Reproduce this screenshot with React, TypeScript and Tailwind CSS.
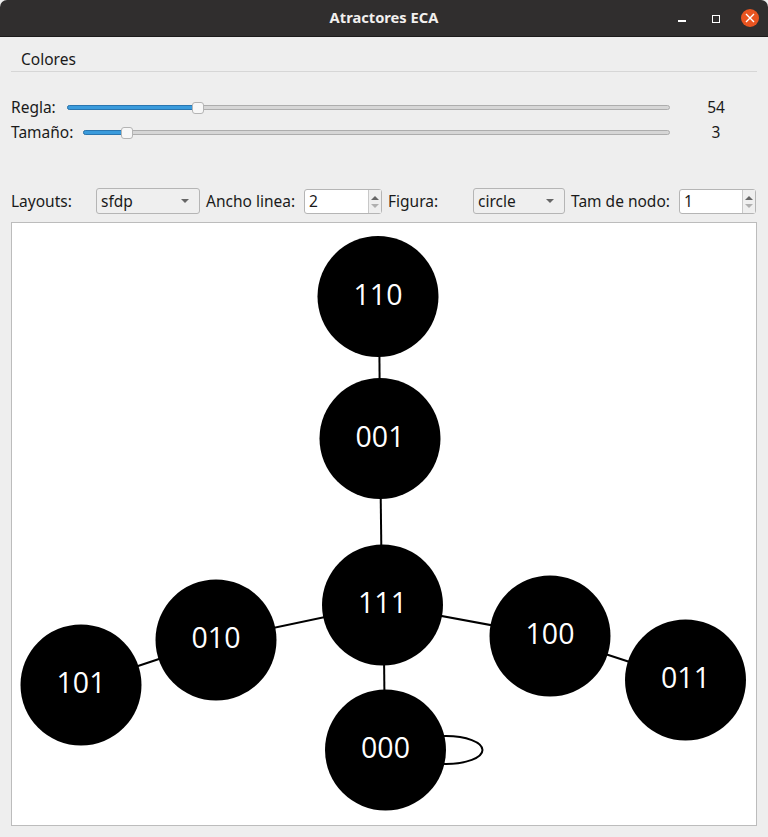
const FONT = "font-['Noto_Sans','Open_Sans',sans-serif]";

const edges = [
  [379, 296, 380, 438],
  [380, 438, 382, 605],
  [382, 605, 216, 640],
  [216, 640, 81, 685],
  [382, 605, 550, 636],
  [550, 636, 685, 680],
  [383.5, 605, 385, 750],
];

const nodes = [
  { x: 378, y: 296.5, label: "110" },
  { x: 380, y: 438.5, label: "001" },
  { x: 382.5, y: 605, label: "111" },
  { x: 216, y: 640, label: "010" },
  { x: 81, y: 685, label: "101" },
  { x: 550, y: 636, label: "100" },
  { x: 685.5, y: 680, label: "011" },
  { x: 385.5, y: 750, label: "000" },
];

const Slider = ({ fill }: { fill: string }) => (
  <div className="relative h-[5px] flex-1 rounded-full border border-[#adadad] bg-[#d6d6d6]">
    <div className={`absolute -top-px -left-px h-[5px] rounded-full border border-[#2a76b0] bg-[#3a9bdc] ${fill}`} />
  </div>
);

const Thumb = ({ pos }: { pos: string }) => (
  <div className={`absolute -top-[3px] h-[12px] w-[12px] rounded-[3px] border border-[#b4b4b4] bg-[#f7f7f7] ${pos}`} />
);

const Combo = ({ value, width }: { value: string; width: string }) => (
  <div className={`flex h-[26px] shrink-0 items-center justify-between self-start rounded-[3px] border border-[#b5b5b5] bg-[#efefef] pr-[10px] pl-1 ${width}`}>
    <span className="mt-[2px]">{value}</span>
    <div className="h-0 w-0 border-x-[4px] border-t-[4px] border-x-transparent border-t-[#666]" />
  </div>
);

const Spin = ({ value, width }: { value: string; width: string }) => (
  <div className={`mt-px flex h-[25px] shrink-0 items-stretch self-start rounded-[3px] border border-[#b5b5b5] bg-white ${width}`}>
    <span className="flex-1 pl-[4px] leading-[23px]">{value}</span>
    <div className="flex w-[13px] flex-col items-center justify-center gap-[4px] border-l border-[#c8c8c8] bg-[#efefef]">
      <div className="h-0 w-0 border-x-[4px] border-b-[4px] border-x-transparent border-b-[#666]" />
      <div className="h-0 w-0 border-x-[4px] border-t-[4px] border-x-transparent border-t-[#b0b0b0]" />
    </div>
  </div>
);

export default function App() {
  return (
    <div className={`flex h-[837px] w-[768px] flex-col overflow-hidden bg-[#eeeeee] text-[15.5px] text-[#1a1a1a] ${FONT}`}>
      <header className="relative flex h-[37px] shrink-0 items-center justify-center rounded-t-[7px] border-b border-[#1c1b1b] bg-[#302e2e]">
        <span className="-mt-px text-[14.7px] font-bold text-[#f2f0ee]">Atractores ECA</span>
        <div className="absolute top-[9px] right-[9px] flex items-center">
          <div className="mt-[5px] h-[2px] w-[8px] bg-white" />
          <div className="mt-[2px] ml-[26px] h-[8px] w-[8px] border border-white" />
          <div className="ml-[21px] flex h-[18px] w-[18px] items-center justify-center rounded-full bg-[#e95420]">
            <svg width="10" height="10" viewBox="0 0 10 10">
              <path d="M1 1 L9 9 M9 1 L1 9" stroke="#fff" strokeWidth="1.4" />
            </svg>
          </div>
        </div>
      </header>

      <div className="mx-[11px] flex h-[35px] shrink-0 items-center border-b border-[#d6d6d6] pt-[11px] pl-[10px]">
        <span>Colores</span>
      </div>

      <div className="mt-[23px] flex h-[25px] shrink-0 items-center pl-[11px]">
        <span className="w-[56px]">Regla:</span>
        <div className="relative flex flex-1 items-center">
          <Slider fill="w-[131px]" />
          <Thumb pos="left-[125px]" />
        </div>
        <span className="w-[98px] pr-[6px] text-center">54</span>
      </div>
      <div className="flex h-[25px] shrink-0 items-center pl-[11px]">
        <span className="w-[72px]">Tamaño:</span>
        <div className="relative flex flex-1 items-center">
          <Slider fill="w-[43px]" />
          <Thumb pos="left-[38px]" />
        </div>
        <span className="w-[98px] pr-[6px] text-center">3</span>
      </div>

      <div className="mt-[43px] flex h-[27px] shrink-0 items-center pl-[11px]">
        <span className="w-[85px]">Layouts:</span>
        <Combo value="sfdp" width="w-[104px]" />
        <span className="w-[104px] pl-[6px]">Ancho linea:</span>
        <Spin value="2" width="w-[78px]" />
        <span className="ml-[2px] w-[89px] pl-[4px]">Figura:</span>
        <Combo value="circle" width="w-[92px]" />
        <span className="w-[114px] pl-[6px]">Tam de nodo:</span>
        <Spin value="1" width="w-[77px]" />
      </div>

      <div className="mx-[11px] mt-[7px] h-[604px] shrink-0 overflow-hidden border border-[#bcbcbc] bg-white">
        <svg width="746" height="604" viewBox="12 223 746 604">
          {edges.map(([x1, y1, x2, y2], i) => (
            <line key={i} x1={x1} y1={y1} x2={x2} y2={y2} stroke="#000" strokeWidth="2" />
          ))}
          <ellipse cx="446" cy="750" rx="36.5" ry="14" fill="none" stroke="#000" strokeWidth="2" />
          {nodes.map((n) => (
            <g key={n.label}>
              <circle cx={n.x} cy={n.y} r="60.5" fill="#000" />
              <text
                x={n.x}
                y={n.y + 8}
                textAnchor="middle"
                fill="#fff"
                fontSize="28.5"
                fontFamily="'Open Sans', sans-serif"
              >
                {n.label}
              </text>
            </g>
          ))}
        </svg>
      </div>
    </div>
  );
}
